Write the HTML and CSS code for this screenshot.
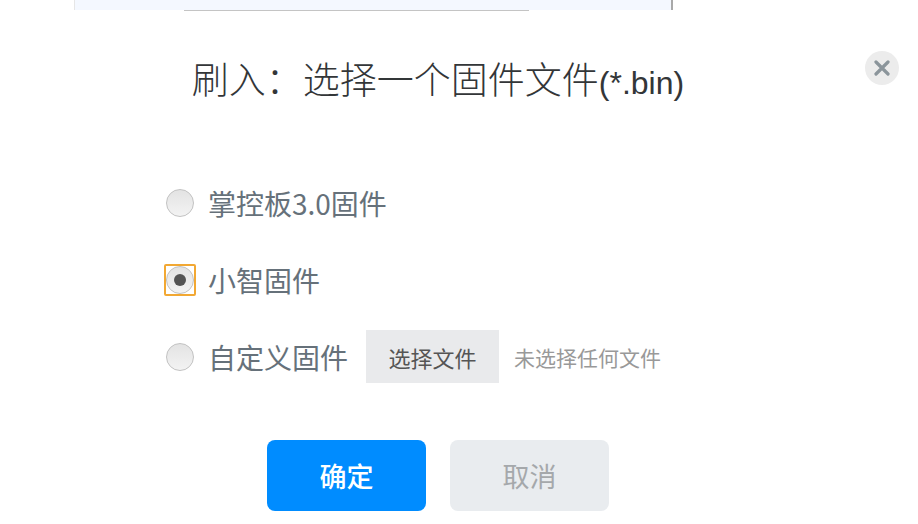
FILE: index.html
```html
<!DOCTYPE html>
<html lang="zh-CN">
<head>
  <meta charset="UTF-8" />
  <meta name="viewport" content="width=device-width, initial-scale=1" />
  <title>刷入固件</title>
  <link rel="stylesheet" href="styles.css">
</head>
<body>
  <div class="backdrop">
    <div class="backdrop-bar"></div>
  </div>

  <div class="dialog">
    <button class="close" aria-label="关闭">
      <svg width="16" height="16" viewBox="0 0 16 16">
        <path d="M2 2 L14 14 M14 2 L2 14" stroke="#8b959b" stroke-width="3.2" stroke-linecap="round" />
      </svg>
    </button>

    <h2 class="title">刷入：选择一个固件文件<span class="ext">(*.bin)</span></h2>

    <div class="options">
      <label class="option">
        <span class="radio-box"><input type="radio" name="fw" value="mpython"></span>
        <span class="label">掌控板3.0固件</span>
      </label>
      <label class="option">
        <span class="radio-box focused"><input type="radio" name="fw" value="xiaozhi" checked></span>
        <span class="label">小智固件</span>
      </label>
      <label class="option">
        <span class="radio-box"><input type="radio" name="fw" value="custom"></span>
        <span class="label">自定义固件</span>
        <span class="file-btn">选择文件</span>
        <span class="file-name">未选择任何文件</span>
      </label>
    </div>

    <div class="actions">
      <button class="btn primary">确定</button>
      <button class="btn">取消</button>
    </div>
  </div>
</body>
</html>
```

FILE: styles.css
```css
body {
  margin: 0;
  background: #fff;
  font-family: "Noto Sans CJK SC", "Noto Sans", sans-serif;
}
.backdrop {
  margin-left: 74px;
  width: 596px;
  height: 10px;
  background: #f4f8ff;
  border-left: 1px solid #e6e6e6;
  border-right: 2px solid #a9a9a9;
}
.backdrop-bar {
  margin-left: 109px;
  width: 345px;
  height: 10px;
  border-bottom: 1px solid #c4c4c4;
}
.dialog {
  position: relative;
  width: 876px;
  padding-top: 44px;
}
.close {
  position: absolute;
  top: 41px;
  left: 865px;
  width: 34px;
  height: 34px;
  border: none;
  border-radius: 50%;
  background: #ececec;
  display: flex;
  align-items: center;
  justify-content: center;
  padding: 0;
}
.title {
  margin: 0;
  height: 48px;
  text-align: center;
  font-size: 37px;
  line-height: 48px;
  font-weight: 300;
  color: #333638;
  white-space: nowrap;
}
.title .ext {
  font-family: "Liberation Sans", sans-serif;
  font-size: 32px;
  font-weight: 400;
  line-height: 1;
}
.options {
  margin-top: 62px;
  padding-left: 164px;
}
.option {
  display: flex;
  align-items: center;
  height: 77px;
}
.radio-box {
  width: 28px;
  height: 28px;
  border: 2px solid transparent;
  border-radius: 2px;
  display: flex;
}
.radio-box.focused {
  border-color: #f2a833;
}
.radio-box input {
  appearance: none;
  margin: 0;
  width: 28px;
  height: 28px;
  border-radius: 50%;
  border: 1px solid #c2c2c2;
  background: linear-gradient(#e3e3e3, #f3f3f3);
  box-sizing: border-box;
  display: flex;
  align-items: center;
  justify-content: center;
}
.radio-box input:checked::after {
  content: "";
  width: 12px;
  height: 12px;
  border-radius: 50%;
  background: #545454;
}
.label {
  margin-left: 12px;
  font-size: 28px;
  color: #66717a;
}
.file-btn {
  margin-left: 18px;
  width: 133px;
  height: 53px;
  background: #e9eaec;
  color: #555;
  font-size: 22px;
  display: flex;
  align-items: center;
  justify-content: center;
}
.file-name {
  margin-left: 15px;
  font-size: 21px;
  color: #999;
}
.actions {
  margin-top: 45px;
  display: flex;
  justify-content: center;
  gap: 24px;
}
.btn {
  width: 159px;
  height: 71px;
  border: none;
  border-radius: 8px;
  background: #e9ecef;
  color: #a5a8ab;
  font-family: inherit;
  font-size: 27px;
}
.btn.primary {
  background: #008cff;
  color: #fff;
  font-weight: 500;
}
```
